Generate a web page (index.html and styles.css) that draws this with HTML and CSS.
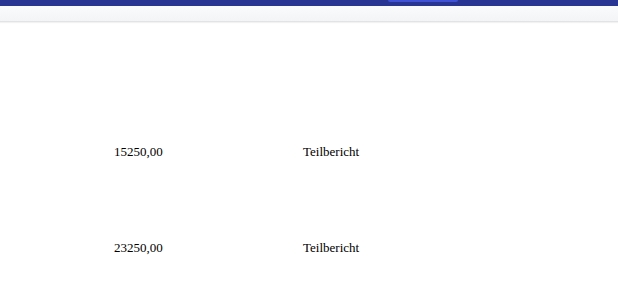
FILE: index.html
```html
<!DOCTYPE html>
<html lang="de">
<head>
  <meta charset="UTF-8" />
  <meta name="viewport" content="width=device-width, initial-scale=1.0" />
  <title>Berichte</title>
  <link rel="stylesheet" href="styles.css">
</head>
<body>
  <header class="topbar">
    <span class="topbar-tab"></span>
  </header>
  <div class="subbar"></div>

  <div class="report-list">
    <div class="report-row">
      <span class="cell-amount">15250,00</span>
      <span class="cell-type">Teilbericht</span>
    </div>
    <div class="report-row">
      <span class="cell-amount">23250,00</span>
      <span class="cell-type">Teilbericht</span>
    </div>
  </div>
</body>
</html>
```

FILE: styles.css
```css
body {
  margin: 0;
  background: #fff;
  font-family: "Liberation Serif", "Times New Roman", serif;
  font-size: 13px;
  color: #000;
  overflow: hidden;
}

.topbar {
  height: 6px;
  background-color: #283593;
  position: relative;
}

.topbar-tab {
  position: absolute;
  left: 388px;
  top: 0;
  width: 70px;
  height: 2px;
  background-color: #3f51d5;
  border-radius: 0 0 3px 3px;
}

.subbar {
  height: 15px;
  background: linear-gradient(#fafbfc, #f3f4f6);
  border-bottom: 1px solid #e2e3e5;
  box-shadow: 0 1px 1px rgba(0,0,0,0.05);
}

.report-list {
  padding-top: 82px;
}

.report-row {
  display: grid;
  grid-template-columns: 189px 1fr;
  align-items: center;
  height: 96px;
  padding-left: 114px;
}
```
